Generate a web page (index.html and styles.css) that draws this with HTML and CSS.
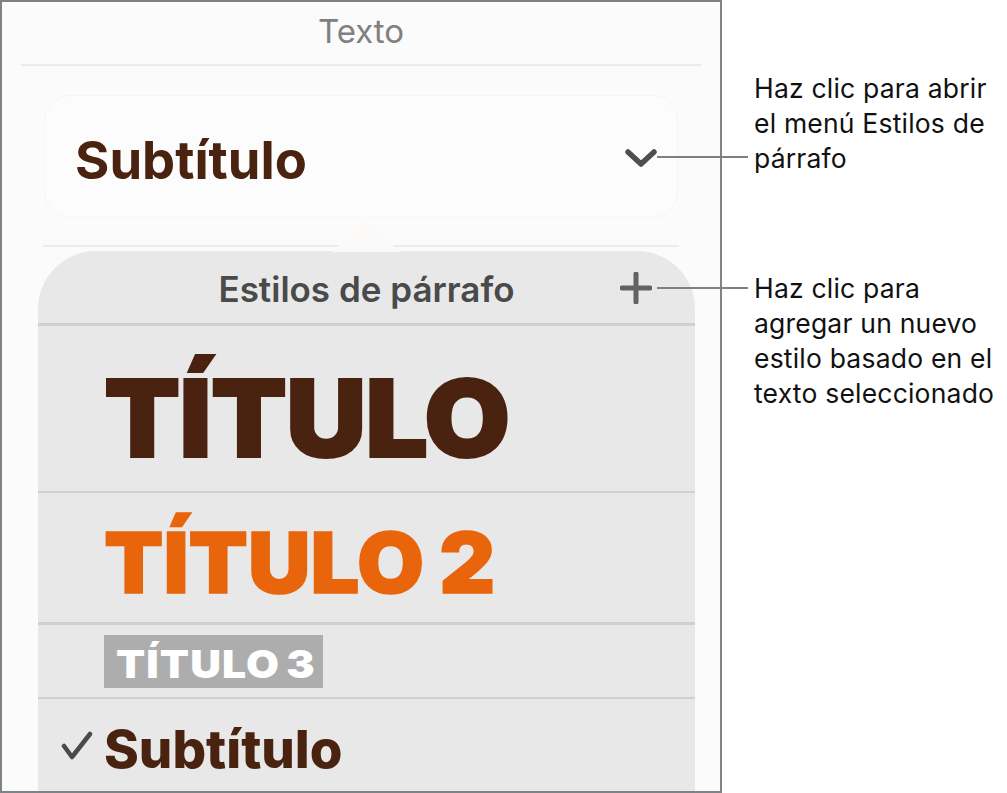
FILE: index.html
```html
<!DOCTYPE html>
<html lang="es">
<head>
    <meta charset="UTF-8">
    <title>Estilos de párrafo</title>
    <link rel="stylesheet" href="styles.css">
</head>
<body>
    <div class="figure">
        <div class="panel">
            <div class="panel-title">Texto</div>
            <div class="style-select">
                <span class="style-name">Subtítulo</span>
                <svg class="chevron" width="32" height="20" viewBox="0 0 32 20">
                    <path d="M3 4 L16 16 L29 4" fill="none" stroke="#4f4f4f" stroke-width="5.5" stroke-linecap="round" stroke-linejoin="round"/>
                </svg>
            </div>
            <div class="select-rule"></div>
            <div class="popover">
                <svg class="popover-arrow" width="68" height="30" viewBox="0 0 68 30">
                    <path d="M0 30 L28 4 Q34 -1 40 4 L68 30 Z" fill="#fbfaf8"/>
                </svg>
                <div class="popover-head">
                    <span class="popover-title">Estilos de párrafo</span>
                    <svg class="plus" width="32" height="32" viewBox="0 0 32 32">
                        <path d="M16 2 V30 M2 16 H30" fill="none" stroke="#636363" stroke-width="5" stroke-linecap="round"/>
                    </svg>
                </div>
                <div class="row row-title1"><span class="title1">TÍTULO</span></div>
                <div class="row row-title2"><span class="title2">TÍTULO 2</span></div>
                <div class="row row-title3"><div class="title3-box"><span class="title3">TÍTULO 3</span></div></div>
                <div class="row row-sub">
                    <svg class="check" width="32" height="30" viewBox="0 0 32 30">
                        <path d="M3 15 L11 26 L29 3" fill="none" stroke="#4a4a4a" stroke-width="4.5" stroke-linecap="round" stroke-linejoin="round"/>
                    </svg>
                    <span class="subtitle">Subtítulo</span>
                </div>
            </div>
        </div>

        <div class="leader leader-menu"></div>
        <div class="leader leader-add"></div>

        <div class="notes">
            <p class="note">Haz clic para abrir<br>el menú Estilos de<br>párrafo</p>
            <p class="note note-add">Haz clic para<br>agregar un nuevo<br>estilo basado en el<br>texto seleccionado</p>
        </div>
    </div>
</body>
</html>
```

FILE: styles.css
```css
html, body {
    margin: 0;
    background-color: #fff;
}
body {
    font-family: Inter, "Liberation Sans", sans-serif;
    overflow: hidden;
}
.figure {
    position: relative;
    display: flex;
    width: 1007px;
    height: 793px;
}
.panel {
    box-sizing: border-box;
    width: 722px;
    height: 793px;
    flex-shrink: 0;
    background-color: #fbfbfb;
    border: 2px solid #7e8186;
    overflow: hidden;
}
.panel-title {
    margin: 0 19px;
    height: 62px;
    border-bottom: 2px solid #ececec;
    text-align: center;
    font-size: 33px;
    line-height: 58px;
    color: #808080;
}
.style-select {
    display: flex;
    align-items: center;
    justify-content: space-between;
    box-sizing: border-box;
    height: 123px;
    margin: 29px 42px 0 42px;
    padding: 0 20px 0 30px;
    background-color: #fcfcfc;
    border: 1px solid #f6f6f6;
    border-radius: 26px;
}
.style-name {
    margin-top: 6px;
    font-size: 52.5px;
    font-weight: 700;
    color: #4a2210;
}
.chevron {
    margin-top: 2px;
}
.select-rule {
    height: 2px;
    margin: 27px 41px 0 41px;
    background-color: #ececec;
}
.popover {
    position: relative;
    width: 657px;
    margin: 4px 0 0 36px;
    background-color: #e8e8e8;
    border-radius: 58px 58px 0 0;
}
.popover-arrow {
    position: absolute;
    top: -29px;
    left: 294px;
}
.popover-head {
    position: relative;
    height: 72px;
    border-bottom: 3px solid #d0d0d0;
    text-align: center;
    line-height: 76px;
}
.popover-title {
    font-size: 35px;
    font-weight: 600;
    color: #4a4a4a;
}
.plus {
    position: absolute;
    top: 21px;
    right: 43px;
}
.row {
    display: flex;
    align-items: center;
    padding-left: 66px;
    border-bottom: 2px solid #d0d0d0;
}
.row-title1 {
    height: 147px;
    padding-top: 18px;
}
.row-title2 {
    height: 120px;
    padding-top: 9px;
    border-bottom-width: 3px;
}
.row-title3 {
    height: 72px;
}
.row-sub {
    position: relative;
    height: 85px;
    padding-top: 7px;
    border-bottom: none;
}
.title1 {
    display: inline-block;
    font-size: 107px;
    font-weight: 900;
    letter-spacing: -1px;
    color: #4a2210;
    -webkit-text-stroke: 2px #4a2210;
    transform: scaleX(1.04);
    transform-origin: left center;
}
.title2 {
    display: inline-block;
    font-size: 84px;
    font-weight: 900;
    word-spacing: -2px;
    color: #e8650c;
    -webkit-text-stroke: 1.5px #e8650c;
    transform: scaleX(1.03);
    transform-origin: left center;
}
.title3-box {
    box-sizing: border-box;
    width: 219px;
    height: 53px;
    padding-left: 12px;
    background-color: #adadad;
}
.title3 {
    display: inline-block;
    font-size: 38px;
    font-weight: 900;
    line-height: 59px;
    letter-spacing: 1px;
    word-spacing: -3px;
    color: #fff;
    transform: scaleX(1.12);
    transform-origin: left center;
}
.subtitle {
    font-size: 52.8px;
    font-weight: 800;
    color: #4a2210;
}
.check {
    position: absolute;
    left: 23px;
    top: 32px;
}
.leader {
    position: absolute;
    left: 657px;
    width: 91px;
    height: 2px;
    background-color: #808080;
}
.leader-menu {
    top: 156px;
}
.leader-add {
    top: 287px;
}
.notes {
    padding: 71px 0 0 32px;
    white-space: nowrap;
}
.note {
    margin: 0;
    font-size: 26.5px;
    line-height: 35px;
    letter-spacing: 0.2px;
    color: #111;
}
.note-add {
    margin-top: 95px;
}
```
